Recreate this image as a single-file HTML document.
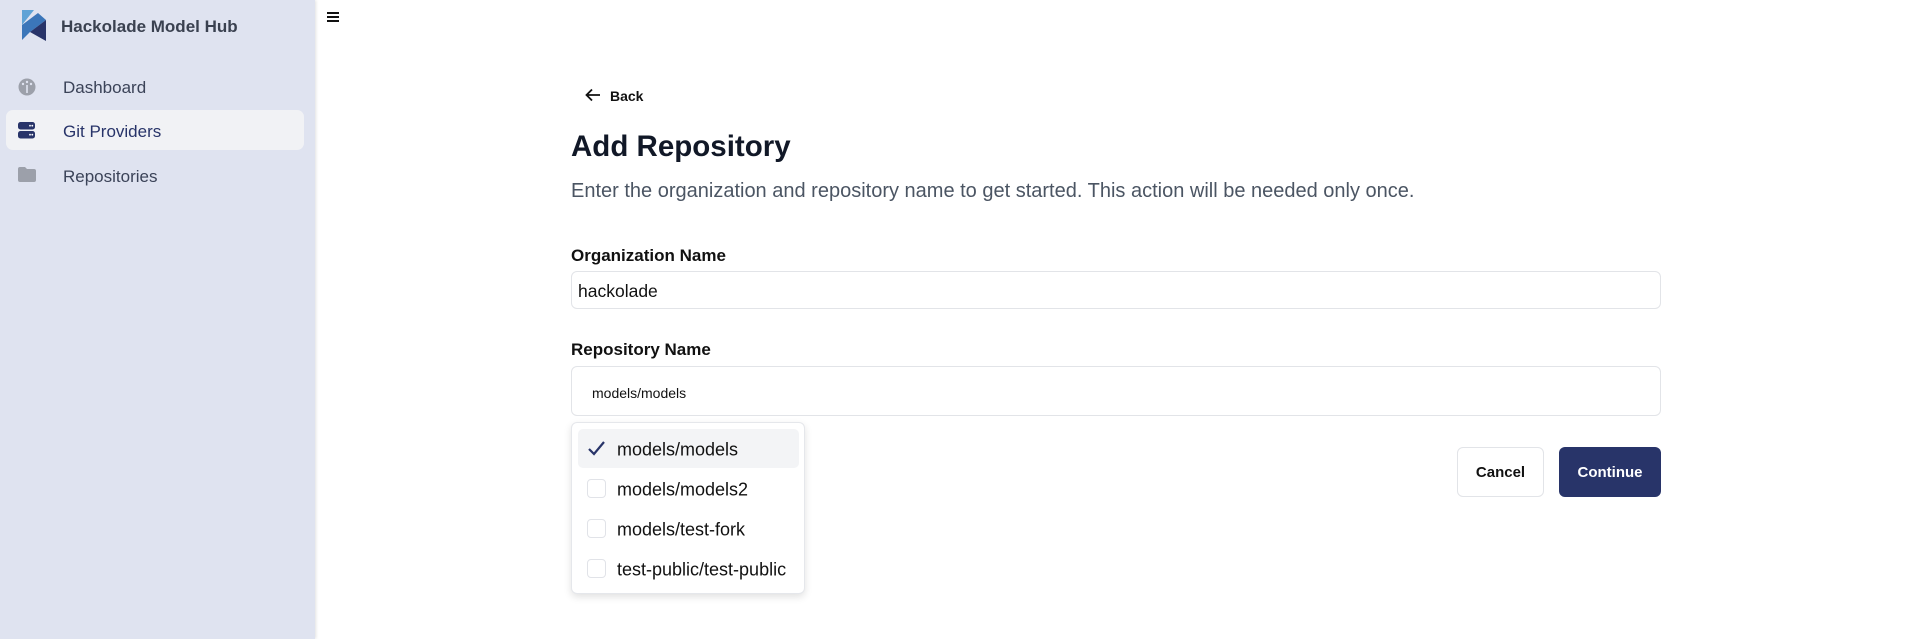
<!DOCTYPE html>
<html><head><meta charset="utf-8"><style>
*{box-sizing:border-box;margin:0;padding:0}
body{width:1915px;height:639px;overflow:hidden;background:#fff;font-family:"Liberation Sans",sans-serif;position:relative;color:#111827}
.sb{position:absolute;left:0;top:0;width:315px;height:639px;background:#dfe3f0;box-shadow:1px 0 3px rgba(0,0,0,.12)}
.ab{position:absolute;white-space:nowrap}
.nav{position:absolute;left:63px;font-size:17px;color:#3b4358;transform:translateY(-50%)}
.inp{position:absolute;border:1px solid #e2e4e8;border-radius:6px;background:#fff}
.cb{position:absolute;left:587px;width:19px;height:19px;border:1px solid #e1e3e8;border-radius:4px;background:#fff}
.it{position:absolute;left:617px;font-size:18px;color:#111;transform:translateY(-50%)}
</style></head><body>
<div class="sb">
  <svg class="ab" style="left:22px;top:10px" width="24" height="31" viewBox="0 0 24 31">
    <polygon points="0,0 12,0 0,15" fill="#5fa3d6"/>
    <polygon points="0,15 16,3 24,10 8,22 0,30" fill="#3b76b9"/>
    <polygon points="8,22 24,10 24,31" fill="#283469"/>
  </svg>
  <div class="ab" style="left:61px;top:17px;font-size:17px;font-weight:bold;color:#3a4150">Hackolade Model Hub</div>
  <svg class="ab" style="left:18px;top:78px" width="18" height="18" viewBox="0 0 18 18"><circle cx="9" cy="9" r="8.5" fill="#9ca0aa"/><circle cx="9" cy="4" r="1.2" fill="#dfe3f0"/><circle cx="5" cy="6" r="1.2" fill="#dfe3f0"/><circle cx="13" cy="6" r="1.2" fill="#dfe3f0"/><rect x="8.2" y="7" width="1.6" height="8" fill="#dfe3f0"/></svg>
  <div class="nav" style="top:88px">Dashboard</div>
  <div class="ab" style="left:6px;top:110px;width:298px;height:40px;background:#f1f2f5;border-radius:7px"></div>
  <svg class="ab" style="left:18px;top:122px" width="18" height="17" viewBox="0 0 18 17"><rect x="0" y="0" width="17" height="7.5" rx="2.5" fill="#283469"/><rect x="0" y="9" width="17" height="7.5" rx="2.5" fill="#283469"/><circle cx="12" cy="3.7" r=".9" fill="#fff"/><circle cx="14.3" cy="3.7" r=".9" fill="#fff"/><circle cx="12" cy="12.7" r=".9" fill="#fff"/><circle cx="14.3" cy="12.7" r=".9" fill="#fff"/></svg>
  <div class="nav" style="top:132px;color:#283469">Git Providers</div>
  <svg class="ab" style="left:18px;top:167px" width="18" height="15" viewBox="0 0 18 15"><path d="M0 2a2 2 0 0 1 2-2h5l2 2h7a2 2 0 0 1 2 2v9a2 2 0 0 1-2 2H2a2 2 0 0 1-2-2z" fill="#9ca0aa"/></svg>
  <div class="nav" style="top:177px">Repositories</div>
</div>
<div class="ab" style="left:327px;top:12px;width:12px;height:2px;background:#111;box-shadow:0 4px 0 #111,0 8px 0 #111"></div>
<svg class="ab" style="left:585px;top:88px" width="16" height="14" viewBox="0 0 16 14"><path d="M15 7H2M7 1.5 1.5 7 7 12.5" stroke="#111" stroke-width="1.8" fill="none"/></svg>
<div class="ab" style="left:610px;top:88px;font-size:14px;font-weight:bold;color:#111">Back</div>
<div class="ab" style="left:571px;top:130px;font-size:29.5px;font-weight:bold;color:#111827">Add Repository</div>
<div class="ab" style="left:571px;top:180px;font-size:20px;color:#4b5563">Enter the organization and repository name to get started. This action will be needed only once.</div>
<div class="ab" style="left:571px;top:246px;font-size:17px;font-weight:bold;color:#111">Organization Name</div>
<div class="inp" style="left:571px;top:271px;width:1090px;height:38px"></div>
<div class="ab" style="left:578px;top:281px;font-size:17.5px;color:#111">hackolade</div>
<div class="ab" style="left:571px;top:340px;font-size:17px;font-weight:bold;color:#111">Repository Name</div>
<div class="inp" style="left:571px;top:366px;width:1090px;height:50px"></div>
<div class="ab" style="left:592px;top:385px;font-size:14px;color:#111">models/models</div>
<div class="ab" style="left:571px;top:422px;width:234px;height:172px;background:#fff;border:1px solid #e5e7eb;border-radius:6px;box-shadow:0 3px 8px rgba(0,0,0,.12)"></div>
<div class="ab" style="left:578px;top:429px;width:221px;height:39px;background:#f3f4f6;border-radius:5px"></div>
<svg class="ab" style="left:587px;top:439px" width="19" height="19" viewBox="0 0 19 19"><path d="M2 10 7 15 17 3" stroke="#283469" stroke-width="2.2" fill="none"/></svg>
<div class="it" style="top:450px">models/models</div>
<div class="cb" style="top:479px"></div><div class="it" style="top:490px">models/models2</div>
<div class="cb" style="top:519px"></div><div class="it" style="top:530px">models/test-fork</div>
<div class="cb" style="top:559px"></div><div class="it" style="top:570px">test-public/test-public</div>
<div class="ab" style="left:1457px;top:447px;width:87px;height:50px;border:1px solid #e2e4e8;border-radius:6px;background:#fff;font-size:15px;font-weight:bold;color:#111;display:flex;align-items:center;justify-content:center">Cancel</div>
<div class="ab" style="left:1559px;top:447px;width:102px;height:50px;border-radius:6px;background:#283469;font-size:15px;font-weight:bold;color:#fff;display:flex;align-items:center;justify-content:center">Continue</div>
</body></html>
